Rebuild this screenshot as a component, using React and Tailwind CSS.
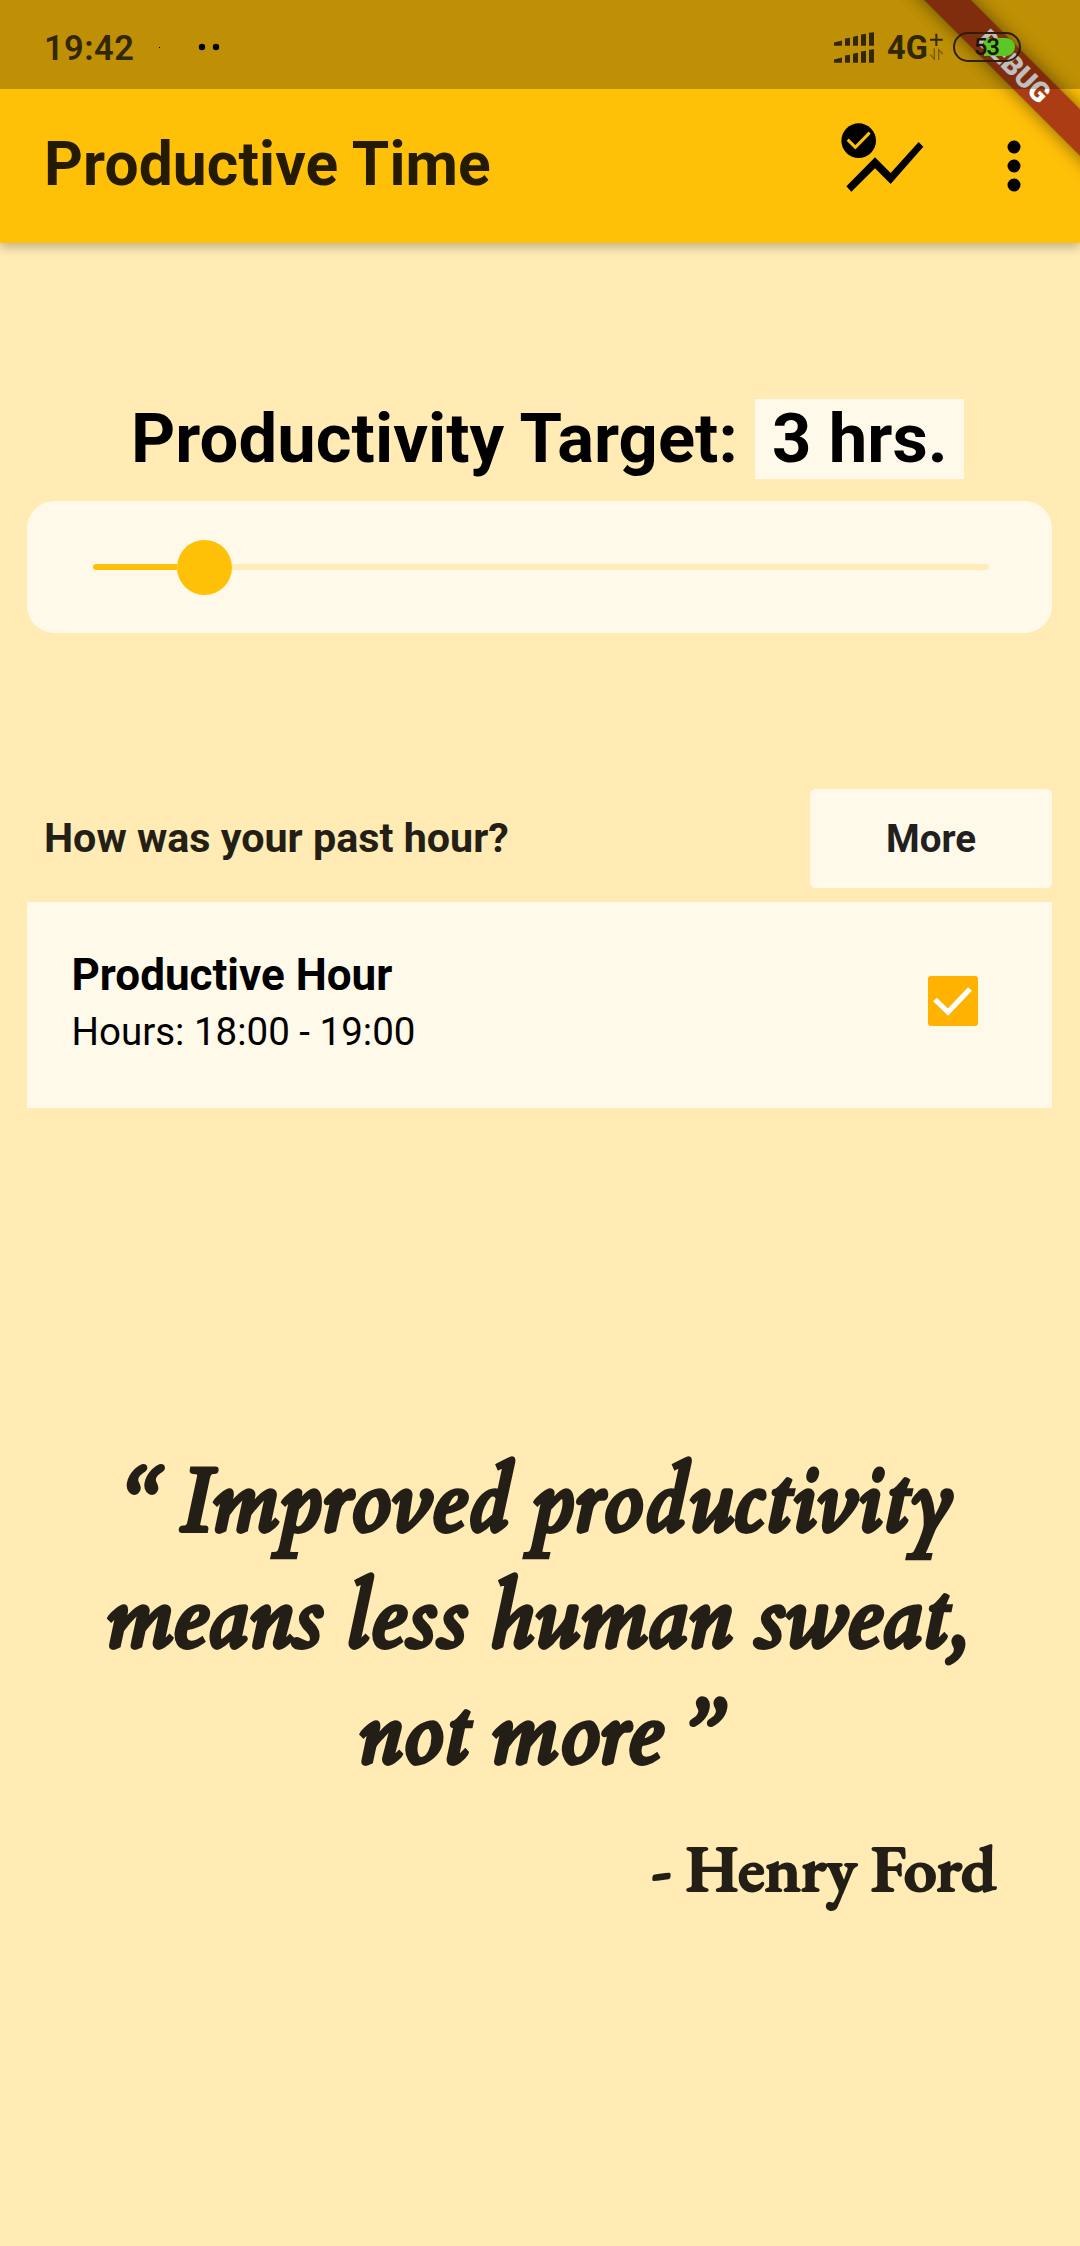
import React from "react";

function SignalBars() {
  const bars = [
    [0, 25, 22],
    [33, 19, 17],
    [57, 14, 11],
    [81, 7, 5],
    [105, 2, 0],
  ];
  return (
    <svg viewBox="0 0 120 92" className="h-[31px] w-[40px]" fill="#332700">
      {[0, 51].map((dy) =>
        bars.map(([x, left, right], i) => (
          <polygon
            key={dy + "-" + x}
            points={
              i === 0
                ? `0,${31 + dy} 24,${25 + dy} 24,${41 + dy} 0,${41 + dy}`
                : `${x},${left + dy} ${x + 15},${right + dy} ${x + 15},${41 + dy} ${x},${41 + dy}`
            }
          />
        ))
      )}
    </svg>
  );
}

function StatusBar() {
  return (
    <div className="absolute inset-x-0 top-0 z-20 flex h-[89px] items-start justify-between bg-black/25">
      <div className="flex items-start pl-[44px]">
        <span className="mt-[28px] w-[100px] text-[34.5px] font-semibold leading-[40px] tracking-[0.4px] text-[#332700]">
          19:42
        </span>
        <svg viewBox="144 40 80 14" className="mt-[40px] h-[14px] w-[80px]">
          <rect x="159" y="47" width="1" height="1" />
          <circle cx="202" cy="47" r="3.2" />
          <circle cx="216" cy="47" r="3.2" />
        </svg>
      </div>
      <div className="flex items-start pr-[59px]">
        <div className="mt-[32px]">
          <SignalBars />
        </div>
        <span className="ml-[13px] mt-[28px] w-[39px] whitespace-nowrap text-[32.5px] font-bold leading-[40px] text-[#332700]">
          4G
        </span>
        <svg viewBox="387 99 45 84" className="ml-[3px] mt-[33px] h-[28px] w-[15px]" fill="none">
          <path d="M390 119H428M409 101V138" stroke="#332700" strokeWidth="6" />
          <path
            d="M403 145V177L391 164M416 180V149L428 162"
            stroke="#332700"
            strokeOpacity="0.5"
            strokeWidth="4"
          />
        </svg>
        <div className="relative ml-[9px] mt-[32px] flex h-[30px] w-[68px] items-center rounded-full border-2 border-[#2b1f05] pl-[19px]">
          <div className="absolute right-[4px] top-[4px] h-[18px] w-[31px] rounded-l-[6px] rounded-r-full bg-[#5cc828]" />
          <span className="relative text-[23.5px] font-semibold leading-[26px] tracking-[-1px] text-[#1c1700]">53</span>
        </div>
      </div>
    </div>
  );
}

function DebugBanner() {
  return (
    <div className="absolute right-0 top-0 z-10 h-[243px] w-[243px] overflow-hidden">
      <div className="absolute left-[27px] top-[49.5px] flex h-[33px] w-[300px] rotate-45 items-center justify-center bg-[#941717]/78 shadow-[0_0_18px_rgba(0,0,0,0.5)]">
        <span className="text-[28px] font-black leading-[33px] text-white">DEBUG</span>
      </div>
    </div>
  );
}

function AppBar() {
  return (
    <header className="relative flex h-[243px] items-center justify-between bg-[#ffc107] pl-[44px] pr-[59px] pt-[89px] shadow-[0_4px_10px_rgba(0,0,0,0.25)]">
      <h1 className="mt-[-3px] text-[60.5px] font-bold leading-[72px] tracking-[0.1px] text-[#241b01]">Productive Time</h1>
      <div className="flex items-center">
        <svg viewBox="123 367 249 208" className="mt-[-17px] h-[69.3px] w-[83px]">
          <circle cx="176" cy="420" r="52" />
          <path d="M143 417L166 440L209 396" fill="none" stroke="#ffc107" strokeWidth="9" />
          <path d="M139 557L225 470L272 517L356 424L370 438L272 550L225 503L154 573Z" />
        </svg>
        <svg viewBox="0 0 14 52" className="ml-[83px] h-[52px] w-[14px]">
          <circle cx="7" cy="7" r="6.5" />
          <circle cx="7" cy="26" r="6.5" />
          <circle cx="7" cy="45" r="6.5" />
        </svg>
      </div>
    </header>
  );
}

function TargetSection() {
  return (
    <section className="mt-[156px] flex flex-col">
      <div className="flex h-[80px] items-center pl-[104px] text-[68.75px] font-bold leading-[80px] tracking-[0.05px] text-black">
        <span className="w-[624px] whitespace-nowrap">Productivity Target:</span>
        <span className="h-[80px] w-[209px] whitespace-nowrap bg-[#fff9e9] pl-[17px]">3 hrs.</span>
      </div>
      <div className="mt-[22px] flex h-[132px] items-center rounded-[27.5px] bg-[#fff9e9] pl-[66px] pr-[63px]">
        <div className="h-[6px] w-[84px] rounded-l-full bg-[#ffc107]" />
        <div className="h-[55px] w-[55px] rounded-full bg-[#ffc107]" />
        <div className="h-[6px] flex-1 rounded-r-full bg-[#ffecb9]" />
      </div>
    </section>
  );
}

function HourSection() {
  return (
    <section className="mt-[156px]">
      <div className="flex items-center justify-between pl-[17px]">
        <h2 className="mt-[-2px] text-[41.25px] font-bold leading-[48px] text-[#231f17]">How was your past hour?</h2>
        <button className="h-[99px] w-[242px] rounded-[5.5px] bg-[#fff9e9] text-[38.5px] font-bold text-[#21201e]">
          More
        </button>
      </div>
      <div className="mt-[14px] flex h-[206px] justify-between bg-[#fff9e9] pl-[44.5px] pr-[74px] pt-[47px] text-black">
        <div>
          <p className="text-[44px] font-bold leading-[52px]">Productive Hour</p>
          <p className="mt-[8px] text-[38.5px] leading-[46px]">Hours: 18:00 - 19:00</p>
        </div>
        <div className="mt-[27px] h-[50px] w-[50px] rounded-[3px] bg-[#ffb300]">
          <svg viewBox="0 0 50 50" className="h-full w-full">
            <path d="M7 23.5L20 36L42 13" fill="none" stroke="#fff" strokeWidth="5.2" />
          </svg>
        </div>
      </div>
    </section>
  );
}

function Quote() {
  return (
    <section className="mt-[337px] text-[#231f17]">
      <p className="flex flex-col items-center whitespace-nowrap font-['Cardo','Liberation_Serif',serif] text-[88px] font-bold italic leading-[116px] [-webkit-text-stroke:3px_#231f17] [font-variant-ligatures:none]">
        <span className="tracking-[1.6px] [word-spacing:-6px]">“ Improved productivity</span>
        <span className="mr-[8px] tracking-[1px] [word-spacing:-3px]">means less human sweat,</span>
        <span className="mr-[2px] tracking-[1px] [word-spacing:-5px]">not more ”</span>
      </p>
      <p className="mt-[32px] pr-[56px] text-right font-['EB_Garamond','Liberation_Serif',serif] text-[66px] font-semibold leading-[86px] tracking-[-0.4px] [-webkit-text-stroke:2px_#231f17]">
        - Henry Ford
      </p>
    </section>
  );
}

export default function App() {
  return (
    <div className="relative h-[2246px] w-[1080px] overflow-hidden bg-[#ffebb3] font-['Roboto',sans-serif]">
      <StatusBar />
      <DebugBanner />
      <AppBar />
      <main className="pl-[27px] pr-[28px]">
        <TargetSection />
        <HourSection />
        <Quote />
      </main>
    </div>
  );
}
